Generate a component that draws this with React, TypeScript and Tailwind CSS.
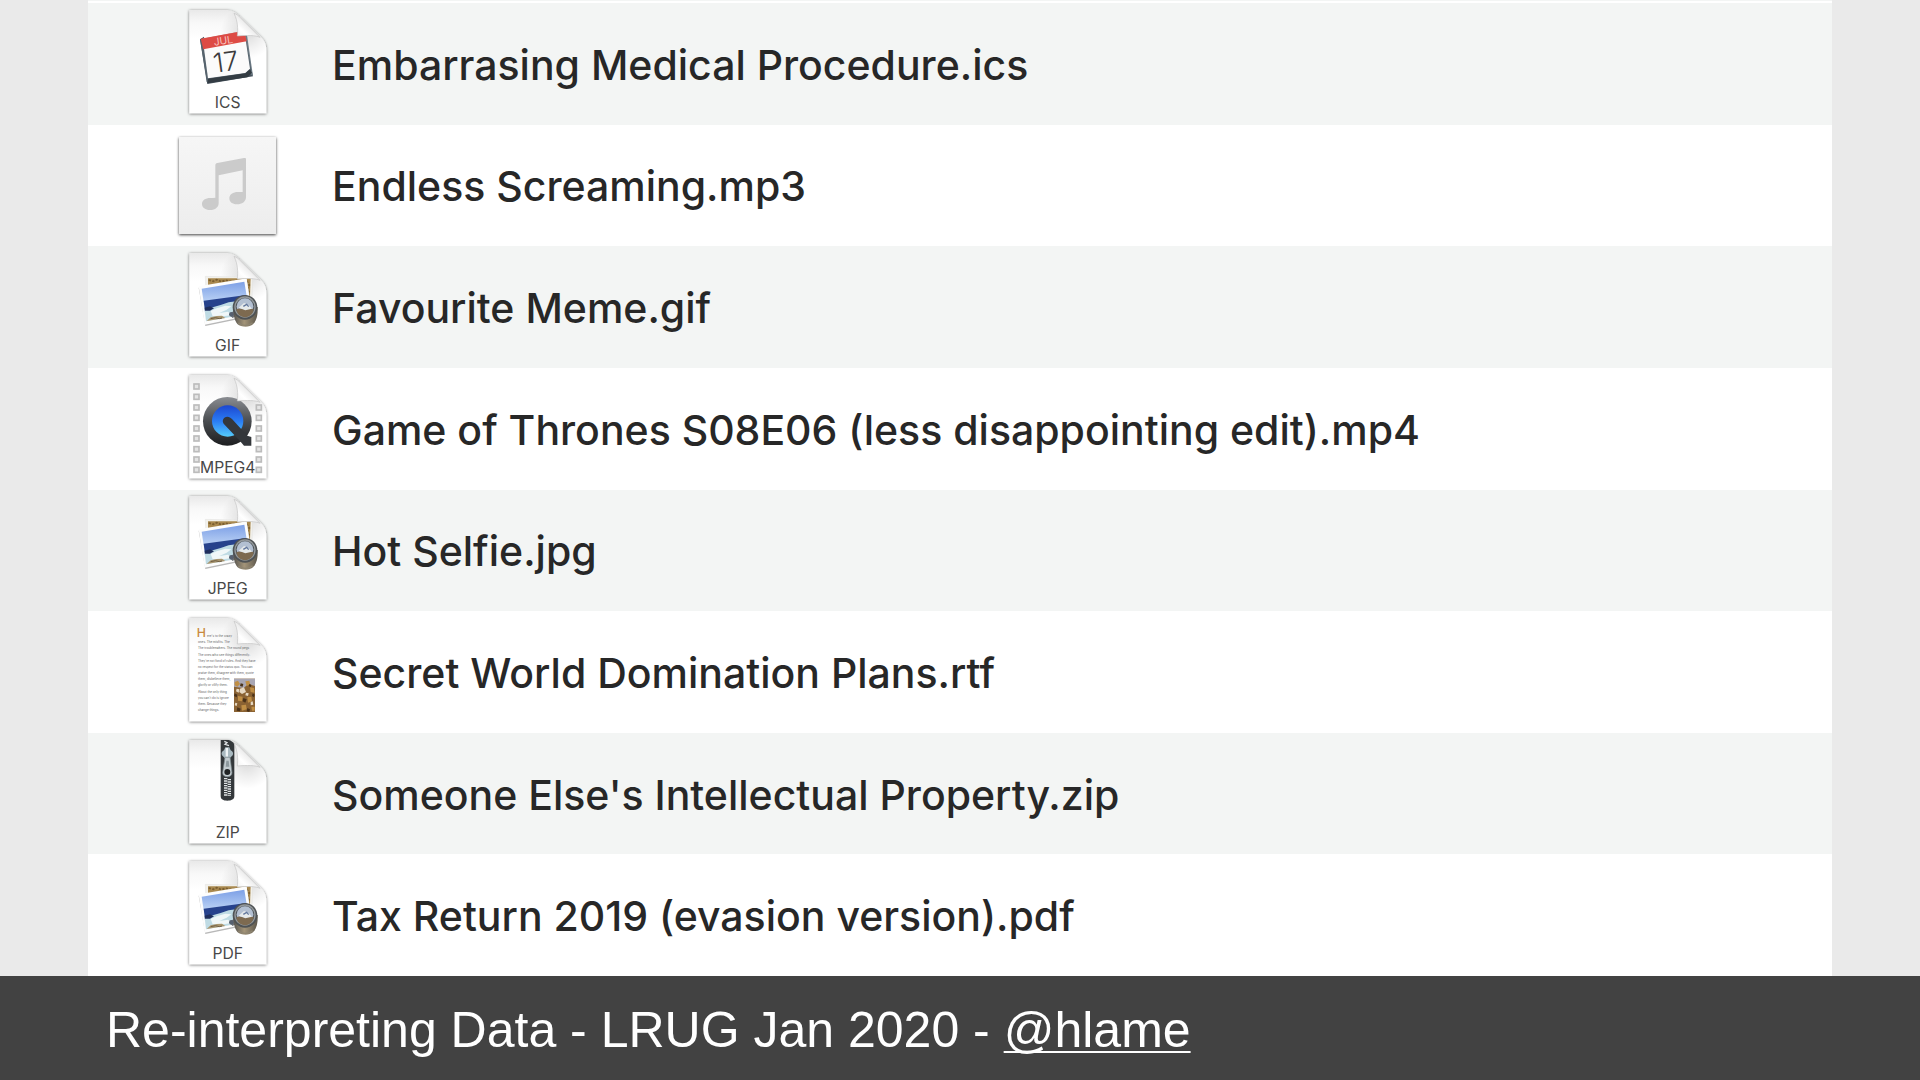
import type { ReactNode } from "react";

const LABEL_FONT = "Inter, 'Liberation Sans', sans-serif";

const RTF_LINES = [
  { x: 141, y: 81, text: "ere's to the crazy" },
  { x: 114, y: 100, text: "ones. The misfits. The" },
  { x: 114, y: 118, text: "The troublemakers. The round pegs" },
  { x: 114, y: 137, text: "The ones who see things differently." },
  { x: 114, y: 156, text: "They're not fond of rules. And they have" },
  { x: 114, y: 174, text: "no respect for the status quo. You can" },
  { x: 114, y: 193, text: "praise them, disagree with them, quote" },
  { x: 114, y: 211, text: "them, disbelieve them," },
  { x: 114, y: 229, text: "glorify or vilify them." },
  { x: 114, y: 248, text: "About the only thing" },
  { x: 114, y: 267, text: "you can't do is ignore" },
  { x: 114, y: 286, text: "them. Because they" },
  { x: 114, y: 304, text: "change things." },
];

const SPROCKETS = [58, 89, 121, 152, 184, 214, 246, 277, 308];

function IconFrame({ children }: { children: ReactNode }) {
  return (
    <svg
      viewBox="48 6 312 360"
      className="h-[120px] w-[104px] shrink-0"
      aria-hidden="true"
    >
      {children}
    </svg>
  );
}

function PageIcon({ label, children }: { label?: string; children: ReactNode }) {
  return (
    <IconFrame>
      <defs>
        <linearGradient id="page" x1="0" y1="0" x2="0" y2="1">
          <stop offset="0" stopColor="#e9e9e9" />
          <stop offset="0.12" stopColor="#f8f8f8" />
          <stop offset="0.28" stopColor="#ffffff" />
          <stop offset="1" stopColor="#ffffff" />
        </linearGradient>
        <linearGradient
          id="fold"
          gradientUnits="userSpaceOnUse"
          x1="232"
          y1="104"
          x2="264"
          y2="70"
        >
          <stop offset="0" stopColor="#f4f4f4" />
          <stop offset="0.5" stopColor="#ffffff" />
          <stop offset="1" stopColor="#ececec" />
        </linearGradient>
        <radialGradient
          id="foldShade"
          gradientUnits="userSpaceOnUse"
          cx="262"
          cy="90"
          r="80"
        >
          <stop offset="0" stopColor="#000" stopOpacity="0.15" />
          <stop offset="0.5" stopColor="#000" stopOpacity="0.07" />
          <stop offset="1" stopColor="#000" stopOpacity="0" />
        </radialGradient>
        <filter id="pageShadow" x="-10%" y="-10%" width="120%" height="120%">
          <feDropShadow
            dx="0"
            dy="2"
            stdDeviation="4"
            floodColor="#000"
            floodOpacity="0.6"
          />
        </filter>
      </defs>
      <path
        d="M88 24H196C216 24 228 32 240 44L302 104C314 116 319 126 319 146V334H88Z"
        fill="url(#page)"
        filter="url(#pageShadow)"
      />
      <path
        d="M88 24H196C216 24 228 32 240 44L302 104C314 116 319 126 319 146V334H88Z"
        fill="url(#foldShade)"
      />
      {children}
      <path
        d="M232 102C234 80 234 58 222 34C230 36 236 42 242 48L300 106C288 100 260 99 232 102Z"
        fill="url(#fold)"
        stroke="#c4c4c4"
        strokeWidth="2"
      />
      {label && (
        <text
          x="203"
          y="318"
          textAnchor="middle"
          fontSize="47"
          fill="#484848"
          fontFamily={LABEL_FONT}
        >
          {label}
        </text>
      )}
    </IconFrame>
  );
}

function CalendarIcon() {
  return (
    <PageIcon label="ICS">
      <path d="M120 112L132 104L146 236L276 210L279 223L142 246Z" fill="#46525c" />
      <path d="M250 88L260 92L279 222L270 216Z" fill="#6d7b85" />
      <path d="M120 112L254 86L274 206L254 224L140 240Z" fill="#56636d" />
      <path d="M128 110L253 87L270 200L256 213L144 229Z" fill="#fbfbfb" />
      <path d="M144 230L256 214L270 202L276 212L262 226L142 244Z" fill="#333c43" />
      <path d="M122 110L253 86L260 118L130 142Z" fill="#dd4b45" />
      <g transform="rotate(-8 200 160)" fontFamily={LABEL_FONT} textAnchor="middle">
        <text x="196" y="126" fontSize="31" fill="#f9c4c0">
          JUL
        </text>
        <text x="195" y="207" fontSize="80" fontWeight="300" fill="#3c3c3c">
          17
        </text>
      </g>
    </PageIcon>
  );
}

function MusicIcon() {
  return (
    <IconFrame>
      <defs>
        <linearGradient id="tile" x1="0" y1="0" x2="0" y2="1">
          <stop offset="0" stopColor="#f6f6f6" />
          <stop offset="1" stopColor="#ededed" />
        </linearGradient>
        <filter id="tileShadow" x="-10%" y="-10%" width="120%" height="120%">
          <feDropShadow
            dx="0"
            dy="3"
            stdDeviation="5"
            floodColor="#000"
            floodOpacity="0.75"
          />
        </filter>
      </defs>
      <rect
        x="57"
        y="42"
        width="291"
        height="291"
        fill="url(#tile)"
        filter="url(#tileShadow)"
      />
      <path
        d="M166 127C166 123 168 121 172 120L252 105C256 104 258 105 258 109V222C258 236 246 244 231 244C217 244 208 237 208 226C208 214 219 207 234 207C240 207 244 207 248 207V142L176 157V240C176 253 166 261 150 261C136 261 126 254 126 243C126 232 136 225 151 225C157 225 162 225 166 224Z"
        fill="#cbcbcb"
      />
    </IconFrame>
  );
}

function PreviewIcon({ label }: { label: string }) {
  return (
    <PageIcon label={label}>
      <defs>
        <linearGradient id="sky" x1="0" y1="0" x2="0" y2="1">
          <stop offset="0" stopColor="#7c9fe6" />
          <stop offset="1" stopColor="#bcd3f5" />
        </linearGradient>
        <linearGradient id="barrel" x1="0" y1="0" x2="1" y2="0">
          <stop offset="0" stopColor="#55534f" />
          <stop offset="0.45" stopColor="#a39478" />
          <stop offset="1" stopColor="#5b564c" />
        </linearGradient>
      </defs>
      <path d="M136 94L278 97L276 166L138 150Z" fill="#f2f1ec" stroke="#d8d8d8" />
      <path d="M144 100H272L270 156H144Z" fill="#a9894f" />
      <path
        d="M146 105l14 4 10-5 14 6 12-4 20 4 14-4 18 6M260 108l8 12-6 12 8 14"
        fill="none"
        stroke="#7a5e30"
        strokeWidth="5"
        strokeDasharray="7 4"
      />
      <path d="M116 128L260 102L278 214L136 243Z" fill="#b8b8b8" />
      <path d="M116 124L260 100L276 210L134 239Z" fill="#fdfdfd" />
      <path d="M125 131L253 110L260 154L131 172Z" fill="url(#sky)" />
      <path d="M131 167L259 150L263 178L135 200Z" fill="#27428c" />
      <path
        d="M134 194L158 187L182 180L206 172L234 168L262 176L266 207L138 229Z"
        fill="#bfdbe4"
      />
      <path
        d="M152 198L170 190L196 182L214 184L200 194L178 204L204 200L216 210L190 214L158 214Z"
        fill="#f0f7f8"
      />
      <path d="M134 188L150 184L162 190L150 197L135 197Z" fill="#1f2e5c" />
      <path d="M140 228L152 217L170 213L186 212L196 219Z" fill="#a9956e" />
      <path d="M152 221l14-3 12 3 8-2" fill="none" stroke="#6f6046" strokeWidth="3" />
      <path d="M209 207L224 196L232 212L217 219Z" fill="#6d7176" />
      <circle cx="214" cy="208" r="7" fill="#566070" />
      <path
        d="M220 186C220 206 222 224 232 237C244 248 268 248 279 238C291 227 294 206 293 186Z"
        fill="url(#barrel)"
      />
      <path
        d="M235 234C248 244 266 243 278 233"
        fill="none"
        stroke="#8e8571"
        strokeWidth="4"
      />
      <circle cx="255" cy="187" r="37" fill="#4e5254" />
      <circle cx="255" cy="186" r="32" fill="#94999c" />
      <circle cx="255" cy="186" r="28" fill="#4f565b" />
      <path d="M230 184A25 24 0 0 1 280 184L279 192H231Z" fill="#b3c0d2" />
      <path d="M229 193C240 186 250 197 262 190L281 192A26 26 0 0 1 230 198Z" fill="#7d6a50" />
      <path d="M236 188L252 174L266 180L276 191L256 196Z" fill="#e6eaeb" />
      <path d="M250 184l10-6 6 7" fill="none" stroke="#62779d" strokeWidth="4" />
    </PageIcon>
  );
}

function MovieIcon() {
  return (
    <PageIcon label="MPEG4">
      <defs>
        <linearGradient id="ring" x1="0" y1="0" x2="0" y2="1">
          <stop offset="0" stopColor="#8a8d92" />
          <stop offset="0.5" stopColor="#494c50" />
          <stop offset="1" stopColor="#1d1e20" />
        </linearGradient>
        <linearGradient id="lens" x1="0" y1="0" x2="0" y2="1">
          <stop offset="0" stopColor="#1d47d0" />
          <stop offset="0.5" stopColor="#2a7cf4" />
          <stop offset="1" stopColor="#55ccfb" />
        </linearGradient>
      </defs>
      {SPROCKETS.map((y) => (
        <g key={y} fill="#e4e4e4" stroke="#bcbcbc" strokeWidth="5">
          <rect x="102" y={y - 7} width="15" height="15" />
          {y > 100 && <rect x="289" y={y - 7} width="15" height="15" />}
        </g>
      ))}
      <circle cx="202" cy="163" r="73" fill="url(#ring)" />
      <circle cx="203" cy="162" r="47" fill="url(#lens)" />
      <path
        d="M191 170C185 161 190 150 202 149C208 149 212 152 216 156L262 206L274 210V236H252L240 222Z"
        fill="#34373b"
      />
    </PageIcon>
  );
}

function RichTextIcon() {
  return (
    <PageIcon>
      <text
        x="110"
        y="82"
        fontSize="37"
        fontWeight="500"
        fill="#c98a3e"
        fontFamily={LABEL_FONT}
      >
        H
      </text>
      <g fontSize="9" fontWeight="500" fill="#777777" fontFamily={LABEL_FONT}>
        {RTF_LINES.map((line) => (
          <text key={line.y} x={line.x} y={line.y}>
            {line.text}
          </text>
        ))}
      </g>
      <rect x="222" y="206" width="63" height="100" fill="#8a6233" />
      <path d="M222 206h63v22l-20-6-14 12-29-4z" fill="#a9a7b4" />
      <g fill="#c08f45">
        <path d="M224 216l10-4 6 10-8 8-8-4z" />
        <path d="M256 214l12-2 3 12-11 4z" />
        <path d="M270 232l12 2 2 14-12-2z" />
        <path d="M234 258l14 2-2 14-12-2z" />
        <path d="M262 262l12-2 2 14-12 4z" />
        <path d="M244 286l14-2 2 14-14 4z" />
        <path d="M274 290h10v12h-8z" />
      </g>
      <g fill="#e6d8c2">
        <path d="M240 236l12-4 6 14-12 6-8-6z" />
        <path d="M230 236l8 2-2 10-8-4z" />
        <path d="M258 248l8 2-2 8-8-2z" />
        <path d="M272 276l6-2 2 10-8 2z" />
        <path d="M226 278l6 2-2 8-6-2z" />
      </g>
      <g fill="#4a3219">
        <path d="M242 220l8 2-2 8-8-2z" />
        <path d="M224 250l8 4-2 8-8-4z" />
        <path d="M250 264l10 4-4 10-8-4z" />
        <path d="M278 250l6 4-2 8-6-4z" />
        <path d="M232 292l10 4-2 8-10-2z" />
        <path d="M262 294l8 4-2 8-8-2z" />
        <path d="M268 222l6 2-2 8-6-4z" />
      </g>
    </PageIcon>
  );
}

function ZipIcon() {
  return (
    <PageIcon label="ZIP">
      <path
        d="M182 24H206C213 26 219 30 223 35V192C223 202 214 206 202 206C190 206 182 202 182 192Z"
        fill="#34383b"
      />
      <path
        d="M193 28l8 4-6 5 12 4"
        fill="none"
        stroke="#dfe3e5"
        strokeWidth="4"
      />
      <path
        d="M197 138V192M208 141V192"
        fill="none"
        stroke="#dfe3e5"
        strokeWidth="10"
        strokeDasharray="4 3"
      />
      <path
        d="M196 46H208L212 55C219 58 221 64 218 70L210 78H194L186 70C183 64 185 58 192 55Z"
        fill="#a9b9c0"
      />
      <path d="M197 48H204V74H197Z" fill="#eef3f5" />
      <path
        d="M195 76H210L216 122C216 130 210 134 202 134C194 134 188 130 188 122Z"
        fill="#c3ccd0"
        stroke="#7f8b90"
        strokeWidth="2"
      />
      <path d="M199 86H206L208 104H197Z" fill="#8d999e" />
      <circle cx="202" cy="120" r="9" fill="#202325" />
    </PageIcon>
  );
}

const FILES = [
  { name: "Embarrasing Medical Procedure.ics", icon: <CalendarIcon /> },
  { name: "Endless Screaming.mp3", icon: <MusicIcon /> },
  { name: "Favourite Meme.gif", icon: <PreviewIcon label="GIF" /> },
  {
    name: "Game of Thrones S08E06 (less disappointing edit).mp4",
    icon: <MovieIcon />,
  },
  { name: "Hot Selfie.jpg", icon: <PreviewIcon label="JPEG" /> },
  { name: "Secret World Domination Plans.rtf", icon: <RichTextIcon /> },
  { name: "Someone Else's Intellectual Property.zip", icon: <ZipIcon /> },
  {
    name: "Tax Return 2019 (evasion version).pdf",
    icon: <PreviewIcon label="PDF" />,
  },
];

export default function App() {
  return (
    <div className="flex min-h-screen flex-col bg-[#eaeaea]">
      <main className="mx-[88px] flex flex-1 flex-col border-t border-[#f3f5f4] bg-white pt-[2px]">
        <ul className="flex flex-1 flex-col">
          {FILES.map((file) => (
            <li
              key={file.name}
              className="flex flex-1 items-center gap-[52px] pl-[88px] odd:bg-[#f3f5f4]"
            >
              {file.icon}
              <span className="pt-[2px] font-[Inter,'Liberation_Sans',sans-serif] text-[41px] leading-[48px] font-[450] whitespace-nowrap text-[#272727]">
                {file.name}
              </span>
            </li>
          ))}
        </ul>
      </main>
      <footer className="flex h-[104px] items-center bg-[#424242] px-[106px] pt-[4px] font-['Liberation_Sans',Arial,sans-serif] text-[50px] leading-[60px] text-white">
        <p>
          Re-interpreting Data - LRUG Jan 2020 -{" "}
          <a
            href="https://twitter.com/hlame"
            className="underline decoration-2 underline-offset-4 [text-decoration-skip-ink:none]"
          >
            @hlame
          </a>
        </p>
      </footer>
    </div>
  );
}
